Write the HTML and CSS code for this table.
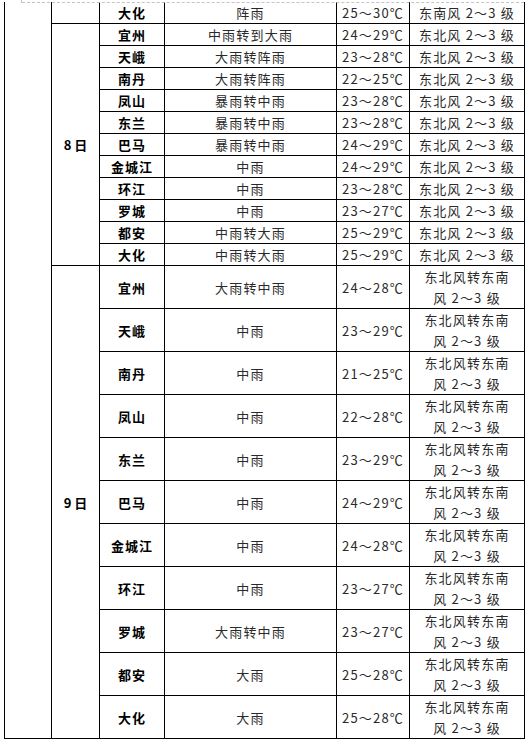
FILE: index.html
```html
<!DOCTYPE html>
<html lang="zh-CN">
<head>
<meta charset="utf-8">
<title>天气预报</title>
<link rel="stylesheet" href="styles.css">
</head>
<body>
<div class="page">
  <div class="margin-mark"></div>
  <table class="forecast">
    <colgroup>
      <col class="c-blank"><col class="c-date"><col class="c-city"><col class="c-weather"><col class="c-temp"><col class="c-wind">
    </colgroup>
    <tbody>
      <tr class="short first">
        <td class="blank" rowspan="24"></td>
        <td class="date"></td>
        <td class="city">大化</td><td class="txt">阵雨</td><td class="txt">25～30℃</td><td class="txt">东南风 2～3 级</td>
      </tr>
      <tr class="short"><td class="date" rowspan="11">8 日</td><td class="city">宜州</td><td class="txt">中雨转到大雨</td><td class="txt">24～29℃</td><td class="txt">东北风 2～3 级</td></tr>
      <tr class="short"><td class="city">天峨</td><td class="txt">大雨转阵雨</td><td class="txt">23～28℃</td><td class="txt">东北风 2～3 级</td></tr>
      <tr class="short"><td class="city">南丹</td><td class="txt">大雨转阵雨</td><td class="txt">22～25℃</td><td class="txt">东北风 2～3 级</td></tr>
      <tr class="short"><td class="city">凤山</td><td class="txt">暴雨转中雨</td><td class="txt">23～28℃</td><td class="txt">东北风 2～3 级</td></tr>
      <tr class="short"><td class="city">东兰</td><td class="txt">暴雨转中雨</td><td class="txt">23～28℃</td><td class="txt">东北风 2～3 级</td></tr>
      <tr class="short"><td class="city">巴马</td><td class="txt">暴雨转中雨</td><td class="txt">24～29℃</td><td class="txt">东北风 2～3 级</td></tr>
      <tr class="short"><td class="city">金城江</td><td class="txt">中雨</td><td class="txt">24～29℃</td><td class="txt">东北风 2～3 级</td></tr>
      <tr class="short"><td class="city">环江</td><td class="txt">中雨</td><td class="txt">23～28℃</td><td class="txt">东北风 2～3 级</td></tr>
      <tr class="short"><td class="city">罗城</td><td class="txt">中雨</td><td class="txt">23～27℃</td><td class="txt">东北风 2～3 级</td></tr>
      <tr class="short"><td class="city">都安</td><td class="txt">中雨转大雨</td><td class="txt">25～29℃</td><td class="txt">东北风 2～3 级</td></tr>
      <tr class="short"><td class="city">大化</td><td class="txt">中雨转大雨</td><td class="txt">25～29℃</td><td class="txt">东北风 2～3 级</td></tr>
      <tr class="tall"><td class="date" rowspan="11">9 日</td><td class="city">宜州</td><td class="txt">大雨转中雨</td><td class="txt">24～28℃</td><td class="txt wind">东北风转东南<br>风 2～3 级</td></tr>
      <tr class="tall"><td class="city">天峨</td><td class="txt">中雨</td><td class="txt">23～29℃</td><td class="txt wind">东北风转东南<br>风 2～3 级</td></tr>
      <tr class="tall"><td class="city">南丹</td><td class="txt">中雨</td><td class="txt">21～25℃</td><td class="txt wind">东北风转东南<br>风 2～3 级</td></tr>
      <tr class="tall"><td class="city">凤山</td><td class="txt">中雨</td><td class="txt">22～28℃</td><td class="txt wind">东北风转东南<br>风 2～3 级</td></tr>
      <tr class="tall"><td class="city">东兰</td><td class="txt">中雨</td><td class="txt">23～29℃</td><td class="txt wind">东北风转东南<br>风 2～3 级</td></tr>
      <tr class="tall"><td class="city">巴马</td><td class="txt">中雨</td><td class="txt">24～29℃</td><td class="txt wind">东北风转东南<br>风 2～3 级</td></tr>
      <tr class="tall"><td class="city">金城江</td><td class="txt">中雨</td><td class="txt">24～28℃</td><td class="txt wind">东北风转东南<br>风 2～3 级</td></tr>
      <tr class="tall"><td class="city">环江</td><td class="txt">中雨</td><td class="txt">23～27℃</td><td class="txt wind">东北风转东南<br>风 2～3 级</td></tr>
      <tr class="tall"><td class="city">罗城</td><td class="txt">大雨转中雨</td><td class="txt">23～27℃</td><td class="txt wind">东北风转东南<br>风 2～3 级</td></tr>
      <tr class="tall"><td class="city">都安</td><td class="txt">大雨</td><td class="txt">25～28℃</td><td class="txt wind">东北风转东南<br>风 2～3 级</td></tr>
      <tr class="tall"><td class="city">大化</td><td class="txt">大雨</td><td class="txt">25～28℃</td><td class="txt wind">东北风转东南<br>风 2～3 级</td></tr>
    </tbody>
  </table>
</div>
</body>
</html>
```
FILE: styles.css
```css
html, body {
  margin: 0;
  padding: 0;
  background: #ffffff;
}

.page {
  position: relative;
  width: 530px;
  height: 744px;
  overflow: hidden;
  font-family: "Noto Sans CJK SC", "Noto Sans", sans-serif;
}

.margin-mark {
  position: absolute;
  top: 2px;
  left: 22px;
  right: 6px;
  height: 0;
  border-top: 1px dashed #c4c4c4;
  z-index: 2;
}

.margin-mark::before {
  content: "";
  position: absolute;
  left: -1px;
  top: -3px;
  width: 0;
  height: 3px;
  border-left: 1px solid #c4c4c4;
}

.forecast {
  border-collapse: collapse;
  table-layout: fixed;
  width: 520px;
  margin: 2px 0 0 4px;
}

.c-blank { width: 47px; }
.c-date { width: 48px; }
.c-city { width: 65px; }
.c-weather { width: 172px; }
.c-temp { width: 73px; }
.c-wind { width: 115px; }

.forecast td {
  border: 1px solid #000;
  padding: 0;
  text-align: center;
  vertical-align: middle;
  white-space: nowrap;
}

.first td,
.forecast td.blank {
  border-top: 0;
}

.short td {
  height: 21px;
  line-height: 21px;
}

.tall td {
  height: 42px;
  line-height: 21px;
}

.forecast td.blank {
  height: auto;
}

.city {
  font-size: 13px;
  font-weight: 700;
  color: #000;
  letter-spacing: 1px;
}

.date {
  font-size: 13px;
  font-weight: 700;
  color: #000;
}

.txt {
  font-size: 13px;
  font-weight: 400;
  color: #2a2a2a;
  letter-spacing: 1.2px;
}

.wind {
  line-height: 21px;
}
```
